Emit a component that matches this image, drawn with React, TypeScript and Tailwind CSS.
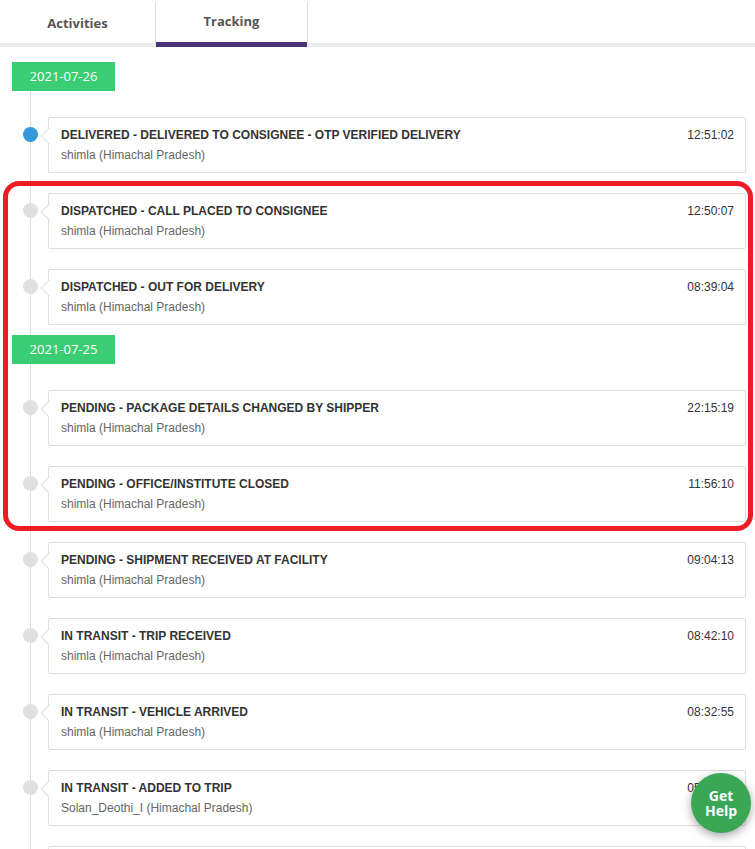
import React from "react";

type Event = { title: string; place: string; time: string; active?: boolean };
type Group = { date: string; events: Event[] };

const groups: Group[] = [
  {
    date: "2021-07-26",
    events: [
      {
        title: "DELIVERED - DELIVERED TO CONSIGNEE - OTP VERIFIED DELIVERY",
        place: "shimla (Himachal Pradesh)",
        time: "12:51:02",
        active: true,
      },
      { title: "DISPATCHED - CALL PLACED TO CONSIGNEE", place: "shimla (Himachal Pradesh)", time: "12:50:07" },
      { title: "DISPATCHED - OUT FOR DELIVERY", place: "shimla (Himachal Pradesh)", time: "08:39:04" },
    ],
  },
  {
    date: "2021-07-25",
    events: [
      { title: "PENDING - PACKAGE DETAILS CHANGED BY SHIPPER", place: "shimla (Himachal Pradesh)", time: "22:15:19" },
      { title: "PENDING - OFFICE/INSTITUTE CLOSED", place: "shimla (Himachal Pradesh)", time: "11:56:10" },
      { title: "PENDING - SHIPMENT RECEIVED AT FACILITY", place: "shimla (Himachal Pradesh)", time: "09:04:13" },
      { title: "IN TRANSIT - TRIP RECEIVED", place: "shimla (Himachal Pradesh)", time: "08:42:10" },
      { title: "IN TRANSIT - VEHICLE ARRIVED", place: "shimla (Himachal Pradesh)", time: "08:32:55" },
      { title: "IN TRANSIT - ADDED TO TRIP", place: "Solan_Deothi_I (Himachal Pradesh)", time: "05:10:41" },
      { title: "IN TRANSIT - SHIPMENT PICKED UP", place: "Solan_Deothi_I (Himachal Pradesh)", time: "04:55:12" },
    ],
  },
];

function EventRow({ ev }: { ev: Event }) {
  return (
    <div className="flex mb-[20px]">
      <div className="w-[48px] shrink-0">
        <div
          className={
            "ml-[23px] mt-[10px] w-[15px] h-[15px] rounded-full relative z-10 " +
            (ev.active ? "bg-[#3498db]" : "bg-[#e0e0e0]")
          }
        />
      </div>
      <div className="relative flex-1 mr-[9px] h-[56px] border border-[#dedede] rounded-[2px] bg-white pl-[12px] pr-[11px] pt-[9px]">
        <div className="absolute left-[-6px] top-[12px] w-[12px] h-[12px] rotate-45 bg-white border-l border-b border-[#dedede]" />
        <div className="flex justify-between items-start">
          <div className="text-[12px] leading-[16px] font-bold text-[#333]">{ev.title}</div>
          <div className="text-[12px] leading-[16px] text-[#333]">{ev.time}</div>
        </div>
        <div className="mt-[4px] text-[12px] leading-[16px] text-[#666]">{ev.place}</div>
      </div>
    </div>
  );
}

export default function App() {
  return (
    <div
      className="relative w-full h-[849px] overflow-hidden bg-white"
      style={{ fontFamily: '"Liberation Sans", Arial, sans-serif' }}
    >
      {/* tabs */}
      <div className="relative h-[47px] border-b-[4px] border-[#ececec] flex" style={{ fontFamily: '"Open Sans", sans-serif' }}>
        <div className="w-[155px] flex items-center justify-center pt-[4px] text-[13px] font-bold text-[#555]">
          Activities
        </div>
        <div className="w-[153px] mt-[3px] border-l border-r border-[#dcdcdc] flex items-center justify-center pb-[2px] text-[13px] font-bold text-[#555] relative">
          Tracking
          <div className="absolute left-0 right-0 bottom-[-4px] h-[5px] bg-[#4b3379]" />
        </div>
      </div>

      {/* timeline */}
      <div className="relative pt-[15px]">
        <div className="absolute left-[30px] top-[15px] bottom-0 w-px bg-[#dcdcdc]" />
        {groups.map((g, gi) => (
          <div key={g.date} className={gi > 0 ? "-mt-[10px]" : ""}>
            <div
              className="relative z-10 ml-[12px] w-[103px] h-[29px] bg-[#3acd73] text-white text-[13px] flex items-center justify-center mb-[26px]"
              style={{ fontFamily: '"Open Sans", sans-serif' }}
            >
              {g.date}
            </div>
            {g.events.map((ev) => (
              <EventRow key={ev.title} ev={ev} />
            ))}
          </div>
        ))}
      </div>

      {/* annotation highlight */}
      <div className="absolute left-[3px] top-[181px] w-[750px] h-[350px] border-[5px] border-[#ee1c24] rounded-[16px] pointer-events-none" />

      {/* help button */}
      <button
        className="absolute right-[4px] top-[773px] w-[60px] h-[60px] rounded-full bg-[#3aa757] text-white text-[14px] font-bold leading-[15px] shadow-[0_3px_10px_rgba(0,0,0,0.35)] flex flex-col items-center justify-center"
        style={{ fontFamily: '"Open Sans", sans-serif' }}
      >
        <span>Get</span>
        <span>Help</span>
      </button>
    </div>
  );
}
